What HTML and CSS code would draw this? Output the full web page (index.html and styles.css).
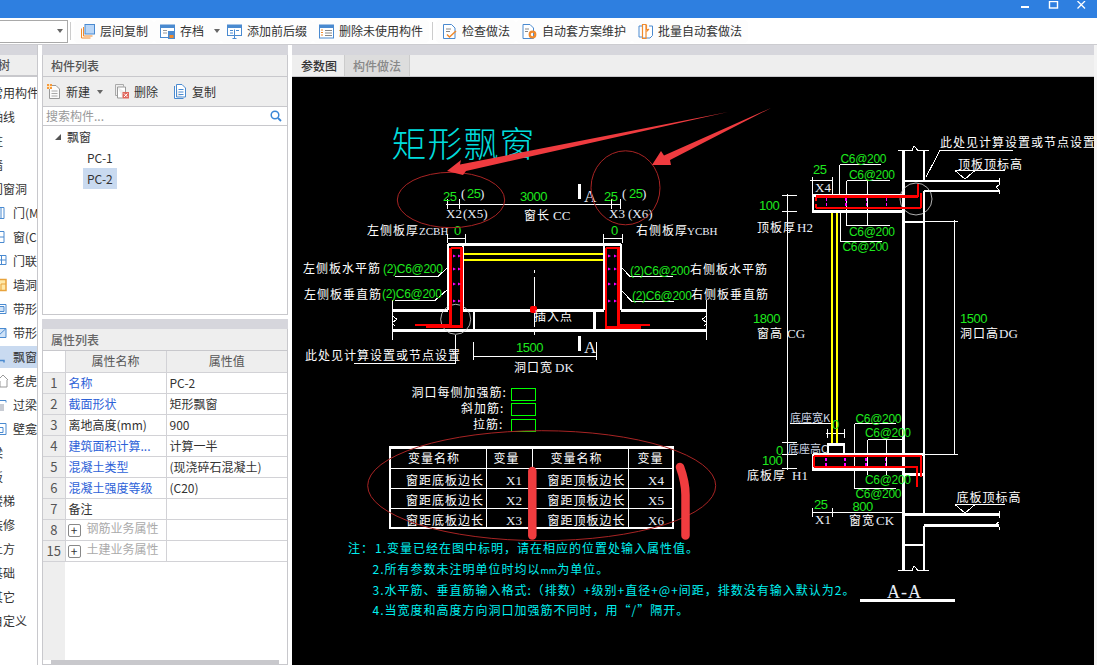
FILE: index.html
```html
<!DOCTYPE html>
<html lang="zh-CN">
<head>
<meta charset="utf-8">
<title>矩形飘窗</title>
<link rel="stylesheet" href="styles.css">
</head>
<body>
<div class="app">
  <header class="titlebar">
    <svg class="winctl" width="75" height="18" viewBox="0 0 75 18">
      <rect x="0" y="5" width="8" height="2" fill="#fff"/>
      <rect x="28.500" y="0.500" width="8" height="6.500" fill="none" stroke="#fff" stroke-width="1.400"/>
      <path d="M56.500 0l7.500 7.500M64 0l-7.500 7.500" stroke="#fff" stroke-width="1.300"/>
    </svg>
  </header>

  <nav class="toolbar">
    <div class="combo"><span class="caret"></span></div>
    <span class="tsep"></span>
    <div class="titem">
      <svg class="ico" viewBox="0 0 15 15"><path d="M1.500 4.500v9.500h9M3.500 3v9h9" fill="none" stroke="#f08a2c"/><rect x="5" y="0.500" width="9.500" height="9.500" fill="#b9d6f7" stroke="#4a8ad0"/></svg>
      <span>层间复制</span>
    </div>
    <div class="titem titem-menu">
      <svg class="ico" viewBox="0 0 15 15"><rect x="0.500" y="1" width="14" height="12.500" fill="#fff" stroke="#4a8ad0"/><rect x="1" y="1" width="13" height="3" fill="#4a8ad0"/><path d="M3 6.500h4M3 9h4" stroke="#999"/><rect x="8" y="7" width="7" height="8" fill="#4a8ad0"/><rect x="9.500" y="11" width="4" height="3" fill="#f08a2c"/></svg>
      <span>存档</span><span class="caret caret-menu"></span>
    </div>
    <div class="titem">
      <svg class="ico" viewBox="0 0 15 15"><rect x="0.500" y="1" width="14" height="10.500" fill="#fff" stroke="#4a8ad0"/><rect x="1" y="1" width="13" height="3" fill="#4a8ad0"/><path d="M3 6.500h3M9 6.500h3M3 9h3" stroke="#4a8ad0"/><path d="M7.500 5.500v9M5.500 14.500h4" stroke="#4a8ad0"/></svg>
      <span>添加前后缀</span>
    </div>
    <div class="titem">
      <svg class="ico" viewBox="0 0 15 15"><rect x="0.500" y="1" width="14" height="13" fill="#fff" stroke="#4a8ad0"/><rect x="1" y="1" width="13" height="3" fill="#4a8ad0"/><path d="M2 6h2M2 8.500h2M2 11h2" stroke="#f08a2c"/><path d="M6 6.500h7M6 9h7M6 11.500h7" stroke="#888"/></svg>
      <span>删除未使用构件</span>
    </div>
    <span class="tsep"></span>
    <div class="titem">
      <svg class="ico" viewBox="0 0 15 15"><path d="M1.500 0.500h8l3.500 3.500v10.500h-11.500z" fill="#fff" stroke="#4a8ad0"/><path d="M4 5h5M4 7.500h4" stroke="#888"/><path d="M5 10.500l2.500 2.500 6.500-6" fill="none" stroke="#f08a2c" stroke-width="1.500"/></svg>
      <span>检查做法</span>
    </div>
    <div class="titem">
      <svg class="ico" viewBox="0 0 15 15"><path d="M1 0.500h7l3.500 3.500v10.500h-10.500z" fill="#fff" stroke="#4a8ad0"/><path d="M3 5h4M3 7.500h3" stroke="#888"/><circle cx="10.500" cy="10.500" r="2.800" fill="none" stroke="#f08a2c" stroke-width="2.200"/></svg>
      <span>自动套方案维护</span>
    </div>
    <div class="titem">
      <svg class="ico" viewBox="0 0 15 15"><path d="M1 2h4M1 2v11h3M11 2h3.500v9.500l-2.500 2.500h-8" fill="#fff" stroke="#4a8ad0"/><path d="M4.500 0.500h3.500v14h-3.500z" fill="none" stroke="#f08a2c" stroke-width="1.200"/><path d="M8.500 1v4.500h2.500M8.500 7.500l2.500-2.500" fill="none" stroke="#f08a2c" stroke-width="1.200"/></svg>
      <span>批量自动套做法</span>
    </div>
  </nav>

  <main class="workspace">
    <aside class="col-tree">
      <div class="strip"></div>
      <div class="head head-tree"><span class="head-clip">导航树</span></div>
      <ul class="navlist">
        <li class="nav-cat">常用构件</li>
        <li class="nav-cat">轴线</li>
        <li class="nav-cat">柱</li>
        <li class="nav-cat">墙</li>
        <li class="nav-cat">门窗洞</li>
        <li class="nav-sub"><svg class="navico" viewBox="0 0 5 14"><path d="M-3 1.500h7v11h-7M1 1.500v11" fill="none" stroke="#4a8ad0"/></svg>门(M)</li>
        <li class="nav-sub"><svg class="navico" viewBox="0 0 5 14"><path d="M-3 1.500h7v11h-7M0 7h4" fill="none" stroke="#4a8ad0"/></svg>窗(C)</li>
        <li class="nav-sub"><svg class="navico" viewBox="0 0 7 14"><path d="M-3 1.500h9v9h-9M1.500 1.500v9M-3 6h9" fill="none" stroke="#4a8ad0"/></svg>门联窗</li>
        <li class="nav-sub"><svg class="navico" viewBox="0 0 7 14"><path d="M-3 1.500h9v11h-9" fill="#ffe9a8" stroke="#e8a33c" stroke-width="1.500"/><path d="M1 6h5M1 6v6" stroke="#e8a33c"/></svg>墙洞</li>
        <li class="nav-sub"><svg class="navico" viewBox="0 0 7 14"><path d="M-3 2.500h9v9h-9" fill="none" stroke="#4a8ad0"/><path d="M-3 4.500h7v5h-7" fill="#cfe2f7" stroke="#4a8ad0"/></svg>带形窗</li>
        <li class="nav-sub"><svg class="navico" viewBox="0 0 7 14"><path d="M-3 2.500h9v9h-9" fill="#cfe2f7" stroke="#4a8ad0"/><path d="M-3 11l9-8.500" stroke="#4a8ad0"/></svg>带形洞</li>
        <li class="nav-sub nav-sel"><svg class="navico" viewBox="0 0 5 14"><path d="M-3 10.500h7v2" fill="none" stroke="#4a8ad0" stroke-width="1.500"/></svg>飘窗</li>
        <li class="nav-sub"><svg class="navico" viewBox="0 0 8 14"><path d="M-3 7l6-6 5 5M0 7v6h7v-7" fill="#fff" stroke="#999"/></svg>老虎窗</li>
        <li class="nav-sub"><svg class="navico" viewBox="0 0 7 14"><path d="M-3 2.500h9M6 2.500v2" fill="none" stroke="#4a8ad0"/><rect x="-3" y="6" width="7" height="7" fill="#c8ccd4"/></svg>过梁</li>
        <li class="nav-sub"><svg class="navico" viewBox="0 0 7 14"><path d="M-3 1.500h9v11h-9" fill="none" stroke="#4a8ad0"/><path d="M-3 5.500h6v5h-6" fill="none" stroke="#4a8ad0"/></svg>壁龛</li>
        <li class="nav-cat">梁</li>
        <li class="nav-cat">板</li>
        <li class="nav-cat">楼梯</li>
        <li class="nav-cat">装修</li>
        <li class="nav-cat">土方</li>
        <li class="nav-cat">基础</li>
        <li class="nav-cat">其它</li>
        <li class="nav-cat">自定义</li>
      </ul>
    </aside>

    <section class="col-mid">
      <div class="strip"></div>
      <div class="panel panel-list">
        <div class="head">构件列表</div>
        <div class="mini-tools">
          <div class="mtool mtool-new">
            <svg class="mico" viewBox="0 0 13 15"><path d="M2.500 1.500h6.500l3.500 3.500v9.500h-10z" fill="#fbfbfb" stroke="#999"/><path d="M4.500 7h6M4.500 9.500h6M4.500 12h6" stroke="#aaa"/><rect x="0" y="0" width="5" height="5" fill="#f79a3c"/><path d="M0 2.500h5M2.500 0v5" stroke="#ffe4b8"/></svg>
            <span>新建</span><span class="caret caret-mini"></span>
          </div>
          <div class="mtool mtool-del">
            <svg class="mico" viewBox="0 0 14 15"><path d="M0.500 0.500h8v2M0.500 0.500v11h2" fill="none" stroke="#aaa"/><path d="M2.500 3h8v5M2.500 3v11h5" fill="#fff" stroke="#999"/><rect x="7.500" y="8" width="6.500" height="6.500" fill="#e0665c"/><path d="M9 9.500l3.500 3.500M12.500 9.500l-3.500 3.500" stroke="#fff"/></svg>
            <span>删除</span>
          </div>
          <div class="mtool">
            <svg class="mico" viewBox="0 0 12 15"><path d="M0.500 2v12.500h9M2.500 0.500h5.500l3.500 3.500v9h-9z" fill="#fff" stroke="#4a8ad0"/><path d="M4.500 5.500h5M4.500 8h5M4.500 10.500h5" stroke="#4a8ad0"/></svg>
            <span>复制</span>
          </div>
        </div>
        <div class="search">
          <span>搜索构件...</span>
          <svg class="search-ico" width="12" height="12" viewBox="0 0 12 12"><circle cx="5" cy="5" r="3.800" fill="none" stroke="#3a86d6" stroke-width="1.500"/><path d="M8 8l3 3" stroke="#3a86d6" stroke-width="1.800"/></svg>
        </div>
        <div class="tree">
          <div class="tree-root"><span class="tri"></span>飘窗</div>
          <div class="tree-leaf"><span>PC-1</span></div>
          <div class="tree-leaf tree-sel"><span>PC-2</span></div>
        </div>
      </div>
      <div class="gap"></div>
      <div class="strip"></div>
      <div class="panel panel-props">
        <div class="head head-muted">属性列表</div>
        <table class="props">
          <thead><tr><th class="idx idx-blank"></th><th>属性名称</th><th>属性值</th></tr></thead>
          <tbody>
            <tr><td class="idx">1</td><td class="link">名称</td><td>PC-2</td></tr>
            <tr><td class="idx">2</td><td class="link">截面形状</td><td>矩形飘窗</td></tr>
            <tr><td class="idx">3</td><td>离地高度(mm)</td><td>900</td></tr>
            <tr><td class="idx">4</td><td class="link">建筑面积计算...</td><td>计算一半</td></tr>
            <tr><td class="idx">5</td><td class="link">混凝土类型</td><td>(现浇碎石混凝土)</td></tr>
            <tr><td class="idx">6</td><td class="link">混凝土强度等级</td><td>(C20)</td></tr>
            <tr><td class="idx">7</td><td>备注</td><td></td></tr>
            <tr><td class="idx">8</td><td class="grp"><span class="plus">+</span>钢筋业务属性</td><td></td></tr>
            <tr><td class="idx">15</td><td class="grp"><span class="plus">+</span>土建业务属性</td><td></td></tr>
          </tbody>
        </table>
        <div class="props-fill"></div>
        <div class="hscroll"></div>
      </div>
    </section>

    <section class="col-right">
      <div class="strip"></div>
      <div class="tabs"><div class="tab tab-on">参数图</div><div class="tab">构件做法</div></div>
      <div class="canvas">
        <svg class="cad" width="802" height="588" viewBox="292 77 802 588">
          <!-- plan: structure -->
          <g class="s2">
            <path d="M447.500 244.500H621M448 244v66M463 244v66M604 244v66M621 244v66"/>
            <path d="M392 310.500H448M463 310.500H604M621 310.500H707M392 330.500H707"/>
            <path d="M474 310v20M594.500 310v20"/>
          </g>
          <g class="s1">
            <path d="M392.500 300v40M706.500 300v40M392 316l5 3-5 4 3 3M707 316l-5 3 5 4-3 3"/>
            <path d="M446 204.500H620M447 199v10M459 199v10M611 199v10M620 199v10"/>
            <path d="M447 238.500H465M603 238.500H622M447 234v9M465 234v9M603 234v9M622 234v9"/>
            <path d="M534.500 270v3M534.500 277v50M534.500 330v5" />
            <path d="M473 356.500H597M473.500 342v18M596.500 342v18"/>
            <path d="M395 276.500H438L447 268M395 300.500H435L447 290"/>
            <path d="M630 276.500H673M630 276.500L622 268M632 301.500H674M632 301.500L622 291"/>
            <path d="M354 363.500H455.500V335"/>
          </g>
          <circle class="c1" cx="455.700" cy="319.300" r="15"/>
          <path class="yl" d="M464 253.700H603M464 260H603"/>
          <g class="rd">
            <path d="M450.500 248V325H415M450.500 248H461.500V326.500H426"/>
            <path d="M606 248V327.500H641M606 248H618.500V325H650"/>
          </g>
          <g class="mg">
            <path d="M453 254.500l3 1.500-3 1.500zM458 254.500l3 1.500-3 1.500zM453 267.500l3 1.500-3 1.500zM458 267.500l3 1.500-3 1.500zM453 282.500l3 1.500-3 1.500zM458 282.500l3 1.500-3 1.500zM453 299.500l3 1.500-3 1.500zM458 299.500l3 1.500-3 1.500z"/>
            <path d="M608 254.500l3 1.500-3 1.500zM614 254.500l3 1.500-3 1.500zM608 267.500l3 1.500-3 1.500zM614 267.500l3 1.500-3 1.500zM608 282.500l3 1.500-3 1.500zM614 282.500l3 1.500-3 1.500zM608 299.500l3 1.500-3 1.500zM614 299.500l3 1.500-3 1.500z"/>
          </g>
          <rect class="redfill" x="530" y="306" width="7" height="7" rx="2"/>
          <rect class="wfill" x="578" y="184" width="3" height="15"/>
          <rect class="wfill" x="578" y="336" width="3" height="15"/>

          <!-- section: structure -->
          <g class="s2">
            <path d="M903.500 150V570M924 150V180M924 191V514M924 526V570"/>
            <path d="M903 181H999M924 191H999M903 222H924"/>
            <path d="M903 514.500H999M924 525.500H999M903 545H924"/>
            <path d="M903 195.500H813V211.500H903"/>
            <path d="M813 454.500H924M813 454V469.500H903M903 474.500H924"/>
            <path d="M828 454V444.500H844V454"/>
            <path d="M860 600.500H955"/>
          </g>
          <g class="s1">
            <path d="M898 150.500H912L914 146 918 150.500H929M898 570.500H912L914 566 918 570.500H929"/>
            <path d="M999 178V185L996 187 999 190V194M999 511V518M999 522L996 524 999 527V530"/>
            <path d="M940 150.500H1013M940 150.500L926 177"/>
            <path d="M955 170.500H1005M955 170.500L965 179 975 170.500"/>
            <path d="M955 504.500H1005M955 504.500L965 513 975 504.500"/>
            <path d="M839.500 164.500H881M839.500 164.500V197M846.500 180.500H890M846.500 180.500V225.500H890M867 180.500V225.500"/>
            <path d="M840 211V241.500H882"/>
            <path d="M810 180.500H833M812.500 177V195M832.500 177V195"/>
            <path d="M787.500 194V470M782 195.500H797M782 211.500H797"/>
            <path d="M954.500 220V455M924 221.500H958M924 454.500H958"/>
            <path d="M790 423.500H832M826 433.500H844M827 429V438M844 429V438"/>
            <path d="M782 442.500H797M782 454.500H797M782 468.500H797"/>
            <path d="M854.500 423.500H896M854.500 423.500V488.500H896M867.500 439.500H904M867.500 439.500V475M886 439.500V475"/>
            <path d="M812 512.500H903M812.500 508V517M832.500 508V517"/>
          </g>
          <circle class="c1" cx="916" cy="199" r="16"/>
          <path class="yl" d="M832 213V443M837 213V443"/>
          <g class="rd">
            <path d="M816 196.700H918M918 184V196.700M816 208H921M921 193V208M816 197V201M816 204V208"/>
            <path d="M814 456H921V477M814 467H917V487M814 456V467"/>
          </g>
          <g class="md">
            <path d="M826.500 198V207M846 198V207M866.500 198V207M886.500 198V207"/>
            <path d="M826 458V466M845 458V466M866 458V466M885.500 458V466"/>
          </g>

          <!-- table and reinforcement boxes -->
          <g class="gb">
            <rect x="511.500" y="388.500" width="24" height="12"/>
            <rect x="511.500" y="403.500" width="24" height="12"/>
            <rect x="511.500" y="419.500" width="24" height="12"/>
          </g>
          <rect class="s2" x="390" y="447.500" width="283" height="80.500"/>
          <path class="s15" d="M390 468.500H673M390 488.500H673M390 508.500H673M486.500 447V528M532.500 447V528M628.500 447V528"/>

          <!-- text: title -->
          <text class="title" x="391.500" y="157">矩形飘窗</text>

          <!-- text: plan -->
          <text class="gn" x="443" y="200.500">25</text>
          <text class="wl" x="461" y="198">(</text>
          <text class="gn" x="467" y="198">25</text>
          <text class="wl" x="480" y="198">)</text>
          <text class="gn" x="520" y="201">3000</text>
          <text class="gn" x="604" y="200.500">25</text>
          <text class="wl" x="622" y="198">(</text>
          <text class="gn" x="629" y="198">25</text>
          <text class="wl" x="642" y="198">)</text>
          <text class="wl" x="446" y="218">X2</text>
          <text class="wl" x="463" y="218">(X5)</text>
          <text class="wl" x="609" y="218">X3</text>
          <text class="wl" x="628" y="218">(X6)</text>
          <text class="ck" x="524" y="220">窗长</text>
          <text class="wl" x="553" y="220">CC</text>
          <text class="wa" x="584" y="202">A</text>
          <text class="wa" x="584" y="353">A</text>
          <text class="ck" x="367" y="235">左侧板厚</text>
          <text class="ws" x="419" y="235">ZCBH</text>
          <text class="ck" x="636" y="235">右侧板厚</text>
          <text class="ws" x="687" y="235">YCBH</text>
          <text class="gn" x="454" y="235">0</text>
          <text class="gn" x="611" y="235">0</text>
          <text class="ck" x="303" y="273">左侧板水平筋</text>
          <text class="gl" x="383" y="273">(2)C6@200</text>
          <text class="ck" x="304" y="299">左侧板垂直筋</text>
          <text class="gl" x="382" y="298">(2)C6@200</text>
          <text class="gl" x="630" y="275">(2)C6@200</text>
          <text class="ck" x="690" y="274">右侧板水平筋</text>
          <text class="gl" x="632" y="300">(2)C6@200</text>
          <text class="ck" x="691" y="299">右侧板垂直筋</text>
          <text class="ck" x="534" y="321">插入点</text>
          <text class="gn" x="516" y="352">1500</text>
          <text class="ck" x="305" y="360">此处见计算设置或节点设置</text>
          <text class="ck" x="514" y="372">洞口宽</text>
          <text class="wl" x="555" y="372">DK</text>

          <!-- text: table block -->
          <text class="ck" x="411.500" y="397">洞口每侧加强筋:</text>
          <text class="ck" x="461" y="413">斜加筋:</text>
          <text class="ck" x="473" y="429">拉筋:</text>
          <text class="ck" x="408" y="463">变量名称</text>
          <text class="ck" x="493.500" y="463">变量</text>
          <text class="ck" x="550.500" y="463">变量名称</text>
          <text class="ck" x="637.500" y="463">变量</text>
          <text class="ck" x="406" y="485">窗距底板边长</text>
          <text class="wl" x="506" y="485">X1</text>
          <text class="ck" x="547.500" y="485">窗距顶板边长</text>
          <text class="wl" x="648" y="485">X4</text>
          <text class="ck" x="406" y="505">窗距底板边长</text>
          <text class="wl" x="506" y="505">X2</text>
          <text class="ck" x="547.500" y="505">窗距顶板边长</text>
          <text class="wl" x="648" y="505">X5</text>
          <text class="ck" x="406" y="525">窗距底板边长</text>
          <text class="wl" x="506" y="525">X3</text>
          <text class="ck" x="547.500" y="525">窗距顶板边长</text>
          <text class="wl" x="648" y="525">X6</text>

          <text class="cy" x="348" y="553">注：</text>
          <text class="cy" x="375" y="553">1.变量已经在图中标明，请在相应的位置处输入属性值。</text>
          <text class="cy" x="372.500" y="574">2.所有参数未注明单位时均以<tspan class="mm">mm</tspan>为单位。</text>
          <text class="cy" x="372.500" y="595">3.水平筋、垂直筋输入格式:（排数）+级别+直径+@+间距，排数没有输入默认为2。</text>
          <text class="cy" x="372.500" y="615">4.当宽度和高度方向洞口加强筋不同时，用“/”隔开。</text>

          <!-- text: section -->
          <text class="ck" x="940" y="147">此处见计算设置或节点设置</text>
          <text class="ck" x="958" y="169">顶板顶标高</text>
          <text class="gl" x="840.500" y="163">C6@200</text>
          <text class="gl" x="849" y="179">C6@200</text>
          <text class="gl" x="849" y="236">C6@200</text>
          <text class="gl" x="842.500" y="251">C6@200</text>
          <text class="gn" x="813" y="174">25</text>
          <text class="wl" x="815" y="191.500">X4</text>
          <text class="gn" x="759" y="210">100</text>
          <text class="ck" x="757" y="232">顶板厚</text>
          <text class="wl" x="797" y="232">H2</text>
          <text class="gn" x="753" y="323">1800</text>
          <text class="ck" x="757" y="338">窗高</text>
          <text class="wl" x="787" y="338">CG</text>
          <text class="gn" x="960" y="323">1500</text>
          <text class="ck" x="960" y="338">洞口高</text>
          <text class="wl" x="999" y="338">DG</text>

          <text class="ks" x="790" y="422">底座宽K</text>
          <text class="gn" x="832" y="429">0</text>
          <text class="ks" x="788" y="453">底座高C</text>
          <text class="gn" x="776" y="455">0</text>
          <text class="gn" x="762" y="465">100</text>
          <text class="ck" x="747" y="480">底板厚</text>
          <text class="wl" x="792" y="480">H1</text>
          <text class="gl" x="855.500" y="423">C6@200</text>
          <text class="gl" x="865" y="437">C6@200</text>
          <text class="gl" x="865" y="484">C6@200</text>
          <text class="gl" x="855.500" y="498">C6@200</text>
          <text class="gn" x="814" y="509">25</text>
          <text class="gn" x="852.500" y="510.500">800</text>
          <text class="wl" x="815" y="524">X1</text>
          <text class="ck" x="849" y="525">窗宽</text>
          <text class="wl" x="876" y="525">CK</text>
          <text class="ck" x="956.500" y="502">底板顶标高</text>
          <text class="aa" x="887" y="597.500">A-A</text>

          <!-- annotations over the drawing -->
          <g class="ann-line">
            <ellipse cx="451" cy="200" rx="53.700" ry="27.700"/>
            <ellipse cx="625.500" cy="187.800" rx="34.500" ry="37"/>
            <ellipse cx="541.700" cy="485.700" rx="174" ry="55"/>
          </g>
          <g class="ann-fill">
            <polygon points="447,171 461,160 460,164.500 728,112 466,171 463,175"/>
            <polygon points="652,165 661,151 664,155.500 771,108 670,160 671,165"/>
          </g>
          <path class="ann-stroke" d="M532.300 471V535.500"/>
          <path class="ann-stroke" d="M680 467C684 478 685.500 484 685.500 495V535.500"/>
        </svg>
      </div>
    </section>
    <div class="edge"></div>
  </main>
</div>
</body>
</html>
```
FILE: styles.css
```css
* { box-sizing: border-box; }
html, body { margin: 0; padding: 0; }
body {
  width: 1097px;
  height: 665px;
  overflow: hidden;
  background: #fff;
  color: #333;
  font: 12px/1 "Noto Sans CJK SC", "Liberation Sans", sans-serif;
}
.app { display: flex; flex-direction: column; height: 665px; }

/* title bar */
.titlebar {
  height: 18px;
  background: #2e7fe0;
  display: flex;
  justify-content: flex-end;
  padding-right: 1px;
  flex: none;
}
.winctl { display: block; margin-top: 1px; }

/* main toolbar */
.toolbar {
  height: 27px;
  flex: none;
  background: #fff;
  border-bottom: 1px solid #ccccd0;
  display: flex;
  align-items: center;
}
.combo {
  width: 68px;
  height: 23px;
  margin-right: 2px;
  border: 1px solid #a9a9a9;
  border-left: 0;
  display: flex;
  align-items: center;
  justify-content: flex-end;
  padding-right: 4px;
}
.caret {
  display: inline-block;
  width: 0;
  height: 0;
  border-left: 3.500px solid transparent;
  border-right: 3.500px solid transparent;
  border-top: 4px solid #666;
}
.caret-menu { margin-left: 5px; }
.caret-mini { margin-left: 1px; }
.tsep { width: 1px; height: 18px; background: #ccc; margin: 0 3px; flex: none; }
.toolbar .tsep:nth-child(2) { margin: 0 3px 0 0; }
.titem {
  display: flex;
  align-items: center;
  gap: 5px;
  height: 23px;
  padding: 0 6px;
  border-radius: 4px;
  background: #fdfdfd;
  color: #333;
}
.titem-menu { padding-right: 1px; }
.ico { width: 15px; height: 15px; display: block; flex: none; }

/* workspace columns */
.workspace { flex: 1; display: flex; min-height: 0; }
.strip { height: 10px; background: #d6d6dc; flex: none; }
.gap { height: 4px; flex: none; background: #fff; }
.head {
  height: 22px;
  background: #eee;
  border-bottom: 1px solid #c8c8cc;
  padding-left: 8px;
  display: flex;
  align-items: center;
  color: #555;
  font-weight: 500;
  flex: none;
}
.head-muted { color: #666; }

.col-tree {
  width: 38px;
  margin-right: 4px;
  border-right: 1px solid #c8c8cc;
  overflow: hidden;
  flex: none;
}
.head-tree { padding-left: 0; border-bottom-width: 2px; }
.head-clip { margin-left: -26px; color: #555; font-weight: 500; white-space: nowrap; }
.navlist {
  list-style: none;
  margin: 0;
  padding: 5px 0 0;
  display: grid;
  row-gap: 2px;
}
.navlist li {
  height: 22px;
  display: flex;
  align-items: center;
  white-space: nowrap;
  color: #333;
}
.navlist .nav-cat { margin-left: -9px; }
.nav-sub { position: relative; padding-left: 13px; }
.nav-sel { background: #c9daf0; }
.navico { position: absolute; left: 0; top: 4px; height: 14px; width: auto; overflow: visible; }

.col-mid { width: 246px; margin-right: 4px; display: flex; flex-direction: column; flex: none; }
.panel { border: 1px solid #c8c8cc; border-top: 0; display: flex; flex-direction: column; }
.panel-list { height: 260px; flex: none; }
.panel-props { flex: 1; min-height: 0; }

.mini-tools {
  height: 30px;
  background: #eee;
  border-bottom: 1px solid #c8c8cc;
  display: flex;
  align-items: center;
  padding-left: 4px;
  flex: none;
}
.mtool { display: flex; align-items: center; gap: 6px; color: #333; }
.mtool-new { margin-right: 12px; }
.mtool-del { margin-right: 16px; gap: 5px; }
.mico { height: 15px; width: auto; display: block; flex: none; }
.search {
  height: 19px;
  border-bottom: 1px solid #c8c8cc;
  background: #fff;
  display: flex;
  align-items: center;
  justify-content: space-between;
  padding: 0 5px 0 3px;
  color: #999;
  flex: none;
}
.tree { flex: 1; background: #fff; }
.tree-root { height: 21px; display: flex; align-items: center; padding-left: 12px; color: #333; }
.tri {
  width: 0;
  height: 0;
  margin-right: 6px;
  border-left: 6px solid transparent;
  border-bottom: 6px solid #555;
}
.tree-leaf { height: 21px; display: flex; align-items: center; padding-left: 44px; color: #333; }
.tree-leaf span { height: 21px; display: flex; align-items: center; padding: 0 3px; margin-left: -3px; }
.tree-sel span { background: #c9daf0; padding: 0 4px; margin-left: -4px; }

/* property table */
.props {
  width: 244px;
  table-layout: fixed;
  border-collapse: collapse;
  flex: none;
}
.props th, .props td {
  height: 21px;
  padding: 0 3px;
  border: 1px solid #d2d2d6;
  font-weight: 400;
  white-space: nowrap;
  overflow: hidden;
  text-align: left;
  color: #333;
}
.props tr > :first-child { border-left: 0; width: 22px; }
.props tr > :nth-child(2) { width: 101px; }
.props tr > :last-child { border-right: 0; }
.props th { background: #eee; text-align: center; color: #555; border-top: 0; }
.props th.idx-blank { background: #fff; border-top: 0; }
.props td.idx { background: #eee; text-align: center; padding: 0; color: #555; font-size: 13px; }
.props td.link { color: #2d62d8; }
.props td.grp { color: #aaa; padding-left: 2px; }
.plus {
  display: inline-block;
  width: 13px;
  height: 13px;
  margin-right: 6px;
  border: 1px solid #888;
  border-radius: 2px;
  color: #333;
  line-height: 10px;
  text-align: center;
  vertical-align: -2px;
}
.props-fill { flex: 1; background: linear-gradient(to right, #eee 22px, #fff 22px); }
.hscroll { height: 4px; background: #c8c8cc; margin: 0 8px; flex: none; }

/* right pane */
.col-right { width: 802px; display: flex; flex-direction: column; flex: none; }
.tabs { height: 22px; background: #eee; border-bottom: 1px solid #c8c8cc; display: flex; flex: none; }
.tab {
  height: 21px;
  padding: 0 8px;
  display: flex;
  align-items: center;
  background: #ddd;
  color: #888;
  font-weight: 500;
  border-right: 1px solid #ccc;
}
.tab-on { width: 53px; background: #eee; color: #333; padding: 0 0 0 9px; }
.canvas { flex: 1; background: #000; min-height: 0; overflow: hidden; }
.cad { display: block; background: #000; }
.edge { flex: 1; background: #f4f4f4; }

/* CAD drawing strokes */
.s1 { fill: none; stroke: #fff; stroke-width: 1; shape-rendering: crispEdges; }
.s15 { fill: none; stroke: #fff; stroke-width: 1.500; shape-rendering: crispEdges; }
.s2 { fill: none; stroke: #fff; stroke-width: 2.500; shape-rendering: crispEdges; }
.c1 { fill: none; stroke: #ddd; stroke-width: 0.800; }
.yl { fill: none; stroke: #ff0; stroke-width: 2; shape-rendering: crispEdges; }
.rd { fill: none; stroke: #f00; stroke-width: 2.500; shape-rendering: crispEdges; }
.mg { fill: #f0f; }
.md { fill: none; stroke: #f0f; stroke-width: 1.500; stroke-dasharray: 3 2; shape-rendering: crispEdges; }
.gb { fill: none; stroke: #0f0; stroke-width: 1; shape-rendering: crispEdges; }
.wfill { fill: #fff; }
.redfill { fill: #f00; }
.ann-line { fill: none; stroke: #a82424; stroke-width: 1; }
.ann-fill { fill: #ef3b3f; }
.ann-stroke { fill: none; stroke: #f03c3f; stroke-width: 8.500; stroke-linecap: round; }

/* CAD text */
.cad text { font-family: "Noto Sans CJK SC", "Liberation Sans", sans-serif; }
.title { font-size: 35px; letter-spacing: 1px; font-weight: 300; fill: #00dcdc; }
.ck { font-size: 12px; letter-spacing: 1px; fill: #fff; }
.ks { font-size: 11px; fill: #cfd8e8; }
.cy { font-size: 12px; letter-spacing: 1px; fill: #00f0f0; }
.mm { font-size: 9px; letter-spacing: 0; }
.cad .gn { font-family: "Liberation Sans", sans-serif; font-size: 13px; letter-spacing: -0.500px; fill: #1ee81e; }
.cad .gl { font-family: "Liberation Sans", sans-serif; font-size: 12px; letter-spacing: -0.300px; fill: #1ee81e; }
.cad .wl { font-family: "Liberation Serif", serif; font-size: 13px; fill: #e8eef8; }
.cad .ws { font-family: "Liberation Serif", serif; font-size: 11px; fill: #e8eef8; }
.cad .wa { font-family: "Liberation Serif", serif; font-size: 17px; fill: #e8eef8; }
.cad .aa { font-family: "Liberation Serif", serif; font-size: 18px; letter-spacing: 1px; fill: #e8eef8; }
```
